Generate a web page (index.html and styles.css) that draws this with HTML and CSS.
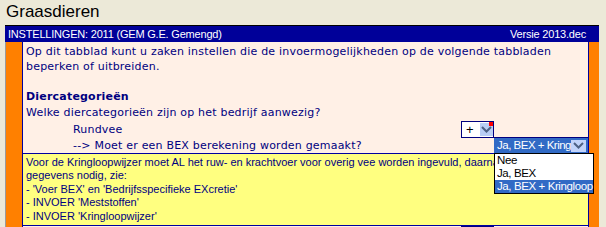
FILE: index.html
```html
<!DOCTYPE html>
<html>
<head>
<meta charset="utf-8">
<link rel="stylesheet" href="styles.css">
</head>
<body>
<div class="page">
  <div class="title">Graasdieren</div>
  <div class="sheet">
    <div class="header">
      <span>INSTELLINGEN: 2011 (GEM G.E. Gemengd)</span>
      <span>Versie 2013.dec</span>
    </div>
    <div class="body">
      <div class="gutter-left"></div>
      <div class="content">
        <div class="intro">
          <div class="line">Op dit tabblad kunt u zaken instellen die de invoermogelijkheden op de volgende tabbladen</div>
          <div class="line">beperken of uitbreiden.</div>
          <div class="line"></div>
          <div class="line tall bold">Diercategorieën</div>
          <div class="line tall">Welke diercategorieën zijn op het bedrijf aanwezig?</div>
        </div>
        <div class="row row-rund">
          <div class="label">Rundvee</div>
          <div class="cell-plus">
            <span class="plus">+</span>
            <span class="btn"><svg width="11" height="7" viewBox="0 0 11 7"><path d="M1 1 L5.5 5.5 L10 1" fill="none" stroke="#4d6185" stroke-width="2"/></svg></span>
            <span class="marker"></span>
          </div>
          <div class="spacer"></div>
        </div>
        <div class="row row-bex">
          <div class="label">--&gt; Moet er een BEX berekening worden gemaakt?</div>
          <div class="cell-empty"></div>
          <div class="cell-sel">
            <span class="sel-text">Ja, BEX + Kring</span>
            <span class="btn btn-sel"><svg width="11" height="7" viewBox="0 0 11 7"><path d="M1 1 L5.5 5.5 L10 1" fill="none" stroke="#4d6185" stroke-width="2"/></svg></span>
          </div>
        </div>
        <div class="note">
          <div>Voor de Kringloopwijzer moet AL het ruw- en krachtvoer voor overig vee worden ingevuld, daarnaast zijn de volgende</div>
          <div>gegevens nodig, zie:</div>
          <div>- 'Voer BEX' en 'Bedrijfsspecifieke EXcretie'</div>
          <div>- INVOER 'Meststoffen'</div>
          <div>- INVOER 'Kringloopwijzer'</div>
        </div>
        <div class="row row-last">
          <div class="label"></div>
          <div class="cell-plus"><span class="marker"></span></div>
          <div class="spacer"></div>
        </div>
        <div class="dropdown">
          <div class="opt">Nee</div>
          <div class="opt">Ja, BEX</div>
          <div class="opt active">Ja, BEX + Kringloop</div>
        </div>
      </div>
      <div class="gutter-right"></div>
    </div>
  </div>
</div>
</body>
</html>
```

FILE: styles.css
```css
html, body {
  margin: 0;
  padding: 0;
}
body {
  background: #ece9d8;
  width: 606px;
  height: 227px;
  overflow: hidden;
}
.page {
  padding-left: 5px;
}
.title {
  font-family: "Liberation Sans", Arial, sans-serif;
  font-size: 17px;
  line-height: 20px;
  height: 20px;
  padding: 2px 0 3px 1px;
  color: #000;
}
.sheet {
  width: 594px;
}
.header {
  border-top: 1px solid #000;
  height: 16px;
  background: #000099;
  color: #fff;
  font-family: "Liberation Sans", Arial, sans-serif;
  font-size: 11px;
  letter-spacing: -0.2px;
  line-height: 16px;
  display: flex;
  justify-content: space-between;
  padding: 0 13px 0 3px;
}
.body {
  display: flex;
  height: 186px;
}
.gutter-left {
  width: 16px;
  background: #ff8000;
  border-left: 1px solid #9a9a9a;
  border-right: 1px solid #0000a0;
}
.gutter-right {
  width: 10px;
  background: #ff8000;
  border-left: 1px solid #0000a0;
}
.content {
  width: 565px;
  background: #fff0e6;
  position: relative;
  font-family: "DejaVu Sans", Verdana, sans-serif;
  font-size: 11px;
  letter-spacing: 0.2px;
  color: #000080;
}
.intro {
  padding: 2px 0 0 3px;
}
.line {
  height: 15px;
  line-height: 15px;
  white-space: nowrap;
}
.line.tall {
  height: 16px;
  line-height: 16px;
}
.bold {
  font-weight: bold;
}
.row {
  display: flex;
}
.row .label {
  width: 388px;
  padding-left: 50px;
  white-space: nowrap;
}
.row-rund {
  height: 17px;
  line-height: 17px;
}
.cell-plus {
  width: 31px;
  border: 1px solid #000080;
  background: #fff;
  position: relative;
  display: flex;
  align-items: center;
  font-family: "Liberation Sans", Arial, sans-serif;
  letter-spacing: 0;
  color: #000;
}
.plus {
  width: 15px;
  padding-left: 4px;
  font-size: 13px;
}
.btn {
  width: 15px;
  height: 13px;
  background: #b9cef5;
  display: flex;
  align-items: center;
  justify-content: center;
}
.marker {
  position: absolute;
  right: 0;
  top: 0;
  width: 4px;
  height: 4px;
  background: #ff0000;
}
.row-bex {
  height: 15px;
  line-height: 15px;
}
.cell-empty {
  width: 33px;
}
.cell-sel {
  flex: 1;
  margin-top: -1px;
  border-top: 1px solid #000080;
  background: #316ac5;
  color: #fff;
  font-family: "Liberation Sans", Arial, sans-serif;
  font-size: 11.5px;
  letter-spacing: -0.5px;
  display: flex;
  align-items: center;
  justify-content: space-between;
  padding: 0 2px 0 3px;
  overflow: hidden;
  white-space: nowrap;
}
.btn-sel {
  height: 12px;
  background: #c1d3fb;
}
.note {
  border-top: 1px solid #0000a0;
  border-bottom: 1px solid #0000a0;
  background: #ffff80;
  height: 69px;
  padding: 2px 0 0 3px;
  font-family: "Liberation Sans", Arial, sans-serif;
  font-size: 11px;
  letter-spacing: 0;
  line-height: 13.4px;
  color: #000080;
  white-space: nowrap;
  overflow: hidden;
}
.row-last {
  height: 3px;
}
.row-last .cell-plus {
  border-bottom: none;
}
.dropdown {
  position: absolute;
  left: 471px;
  top: 111px;
  width: 98px;
  border: 1px solid #000;
  background: #fff;
  font-family: "Liberation Sans", Arial, sans-serif;
  font-size: 11.5px;
  letter-spacing: -0.4px;
  color: #000;
}
.opt {
  height: 13px;
  line-height: 13px;
  padding-left: 2px;
  white-space: nowrap;
}
.opt.active {
  background: #316ac5;
  color: #fff;
}
```
